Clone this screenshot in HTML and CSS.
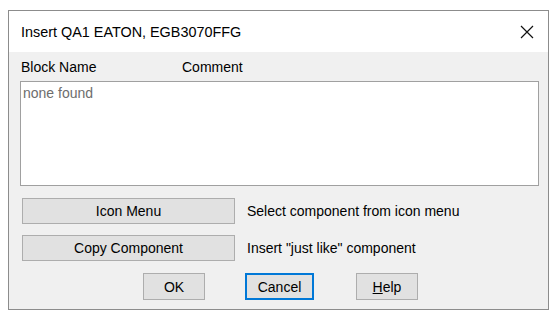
FILE: index.html
```html
<!DOCTYPE html>
<html lang="en">
<head>
    <meta charset="UTF-8">
    <title>Insert QA1 EATON, EGB3070FFG</title>
    <link rel="stylesheet" href="styles.css">
</head>
<body>
<div class="dialog">
    <!-- Title bar -->
    <div class="titlebar">
        <span class="title">Insert QA1 EATON, EGB3070FFG</span>
        <svg class="close" width="14" height="14" viewBox="0 0 14 14">
            <path d="M1 1 L13 13 M13 1 L1 13" stroke="#111" stroke-width="1.2" fill="none"/>
        </svg>
    </div>

    <div class="content">
        <div class="columns">
            <span class="col-block">Block Name</span>
            <span class="col-comment">Comment</span>
        </div>
        <div class="listbox">
            <div class="empty">none found</div>
        </div>

        <div class="action-row first">
            <button class="wide">Icon Menu</button>
            <span class="hint">Select component from icon menu</span>
        </div>
        <div class="action-row">
            <button class="wide">Copy Component</button>
            <span class="hint">Insert "just like" component</span>
        </div>

        <div class="footer">
            <button class="small">OK</button>
            <button class="small default">Cancel</button>
            <button class="small"><u>H</u>elp</button>
        </div>
    </div>
</div>
</body>
</html>
```

FILE: styles.css
```css
body {
    margin: 0;
    padding: 10px 0 0 8px;
    background: #fff;
    font-family: "Liberation Sans", Arial, sans-serif;
    font-size: 14px;
    color: #000;
}
.dialog {
    width: 539px;
    height: 298px;
    border: 1px solid #8c8c8c;
    background: #f0f0f0;
    display: flex;
    flex-direction: column;
}
.titlebar {
    height: 41px;
    background: #fff;
    display: flex;
    align-items: center;
    justify-content: space-between;
    padding: 0 14px 0 12px;
}
.title {
    font-size: 14.4px;
}
.content {
    padding: 0 9px 0 11px;
}
.columns {
    display: flex;
    height: 29px;
    align-items: center;
}
.col-block {
    width: 161px;
    padding-left: 1px;
}
.listbox {
    height: 103px;
    border: 1px solid #a0a0a0;
    background: #fff;
}
.empty {
    color: #6d6d6d;
    padding: 3px 2px;
}
.action-row {
    display: flex;
    align-items: center;
    margin-top: 11px;
}
.action-row.first {
    margin-top: 12px;
}
button {
    font-family: inherit;
    font-size: 14px;
    color: #000;
    background: #e1e1e1;
    border: 1px solid #adadad;
    padding: 0;
    cursor: pointer;
}
.wide {
    width: 213px;
    height: 26px;
    margin-left: 2px;
}
.hint {
    margin-left: 12px;
}
.footer {
    display: flex;
    margin-top: 12px;
    padding-left: 123px;
}
.small {
    width: 62px;
    height: 27px;
}
.small.default {
    width: 69px;
    margin-left: 40px;
    border: 2px solid #0078d7;
}
.small + .small.default + .small {
    margin-left: 42px;
}
```
